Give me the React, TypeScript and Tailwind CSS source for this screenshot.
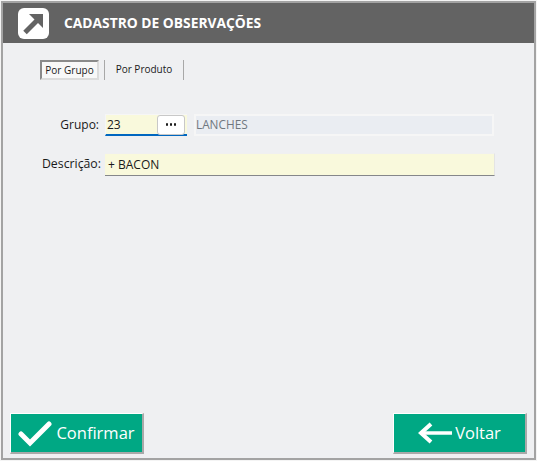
const FONT = "font-['Open_Sans','Noto_Sans',sans-serif]"

function ArrowLogo() {
  return (
    <svg width="31" height="31" viewBox="0 0 31 31">
      <rect width="31" height="31" rx="6" fill="#ffffff" />
      <path d="M7 24.5 L20 11.5" stroke="#636363" strokeWidth="5" fill="none" />
      <path d="M11 6 H25 V20 Z" fill="#636363" />
    </svg>
  )
}

function CheckIcon() {
  return (
    <svg width="34" height="28" viewBox="0 0 34 28">
      <path d="M3 15 L12 24 L31 5" stroke="#ffffff" strokeWidth="5" fill="none" strokeLinecap="round" strokeLinejoin="miter" />
    </svg>
  )
}

function BackIcon() {
  return (
    <svg width="34" height="22" viewBox="0 0 34 22">
      <path d="M34 11 H5" stroke="#ffffff" strokeWidth="3.5" fill="none" />
      <path d="M13 2 L3 11 L13 20" stroke="#ffffff" strokeWidth="4" fill="none" />
    </svg>
  )
}

function ActionButton({ label, icon, gap }: { label: string; icon: React.ReactNode; gap: string }) {
  return (
    <button className={`flex h-[41px] w-[134px] items-center justify-center ${gap} border-t border-l border-white border-r-2 border-b-2 border-r-[#a9a9a9] border-b-[#a9a9a9] bg-[#00a884] text-[16.5px] text-white`}>
      {icon}
      <span>{label}</span>
    </button>
  )
}

export default function App() {
  return (
    <div className={`${FONT} h-[461px] w-[537px] bg-[#f4f4f4] p-px text-[12px] text-[#1a1a1a]`}>
      <div className="flex h-[459px] w-[535px] flex-col border-2 border-[#a3a3a3] bg-[#eff0f2]">
        <div className="flex h-[40px] shrink-0 items-center gap-[15px] bg-[#636363] pl-[15px]">
          <ArrowLogo />
          <h1 className="text-[13.8px] font-bold text-white">CADASTRO DE OBSERVAÇÕES</h1>
        </div>

        <div className="mt-[17px] flex items-center pl-[37px] text-[10px]">
          <div className="flex h-[20px] w-[59px] items-center justify-center border-2 border-t-[#8a8a8a] border-l-[#8a8a8a] border-r-[#dcdcdc] border-b-[#dcdcdc] bg-[#f8f8f8]">
            Por Grupo
          </div>
          <div className="ml-[5px] h-[20px] w-px bg-[#a8a8a8]" />
          <div className="flex h-[20px] w-[78px] items-center justify-center pb-[1px]">Por Produto</div>
          <div className="h-[20px] w-px bg-[#a8a8a8]" />
        </div>

        <div className="mt-[34px] flex h-[22px] items-center">
          <label className="w-[96px] text-right">Grupo:</label>
          <div className="ml-[6px] flex h-[22px] w-[82px] items-center justify-between border-t border-l border-t-[#f6f6f6] border-l-[#f6f6f6] border-b-2 border-b-[#0067c0] bg-[#f9f9dc] pl-[1px] pr-[2px]">
            <span>23</span>
            <button className="flex h-[20px] w-[28px] items-center justify-center gap-[1.5px] rounded-[3px] border border-[#c8c8c8] bg-white">
              <span className="h-[2.5px] w-[2.5px] rounded-full bg-[#1a1a1a]" />
              <span className="h-[2.5px] w-[2.5px] rounded-full bg-[#1a1a1a]" />
              <span className="h-[2.5px] w-[2.5px] rounded-full bg-[#1a1a1a]" />
            </button>
          </div>
          <div className="ml-[7px] flex h-[22px] w-[300px] items-center border-2 border-[#f6f6f6] bg-[#eaedf2] text-[11.8px] text-[#6f7780]">
            LANCHES
          </div>
        </div>

        <div className="mt-[17px] flex h-[23px] items-center">
          <label className="w-[98px] text-right text-[12.3px]">Descrição:</label>
          <div className="ml-[4px] flex h-[23px] w-[390px] items-center border-t border-r border-t-[#f0f0f0] border-r-[#e4e4e4] border-b border-b-[#85878a] bg-[#f9f9dc] pl-[3px] text-[12px]">
            + BACON
          </div>
        </div>

        <div className="mt-auto mb-[4px] flex justify-between pl-[7px] pr-[7px]">
          <ActionButton label="Confirmar" gap="gap-[4px]" icon={<CheckIcon />} />
          <ActionButton label="Voltar" gap="gap-[3px]" icon={<BackIcon />} />
        </div>
      </div>
    </div>
  )
}
